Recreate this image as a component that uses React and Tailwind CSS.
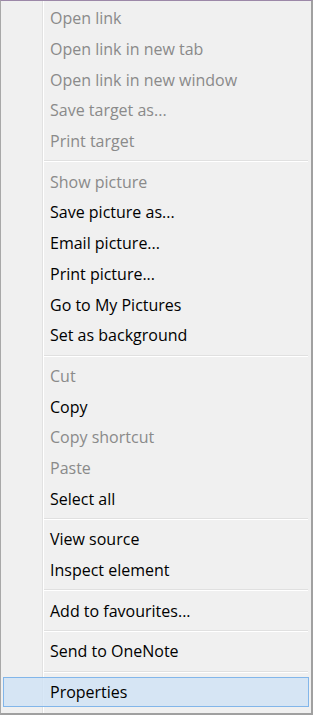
const GROUPS = [
  [
    { label: 'Open link', disabled: true },
    { label: 'Open link in new tab', disabled: true },
    { label: 'Open link in new window', disabled: true },
    { label: 'Save target as...', disabled: true },
    { label: 'Print target', disabled: true },
  ],
  [
    { label: 'Show picture', disabled: true },
    { label: 'Save picture as...' },
    { label: 'Email picture...' },
    { label: 'Print picture...' },
    { label: 'Go to My Pictures' },
    { label: 'Set as background' },
  ],
  [
    { label: 'Cut', disabled: true },
    { label: 'Copy' },
    { label: 'Copy shortcut', disabled: true },
    { label: 'Paste', disabled: true },
    { label: 'Select all' },
  ],
  [{ label: 'View source' }, { label: 'Inspect element' }],
  [{ label: 'Add to favourites...' }],
  [{ label: 'Send to OneNote' }],
  [{ label: 'Properties', active: true }],
]

function Item({ label, disabled, active }) {
  return (
    <div className="h-[30.7px] px-[2px]">
      <div
        className={
          'h-full flex items-center pl-[46px] border ' +
          (active ? 'bg-[#cfe2f5]/80 border-[#82b6ea]' : 'border-transparent')
        }
      >
        <span className={disabled ? 'text-[#8a8a8a]' : 'text-black'}>{label}</span>
      </div>
    </div>
  )
}

function Separator() {
  return (
    <div className="h-[10px] flex items-center pl-[43px] pr-[3px]">
      <div className="w-full border-t border-b border-t-[#e0e0e0] border-b-white" />
    </div>
  )
}

export default function App() {
  return (
    <div
      className="w-[313px] h-[715px] bg-[#f0f0f0] border-t border-t-[#9c88a8] border-l border-l-[#a8a8a8] border-r-2 border-r-[#a0a0a0] border-b-2 border-b-[#a0a0a0] text-[16px] leading-none overflow-hidden"
      style={{ fontFamily: '"Open Sans", "Noto Sans", sans-serif' }}
    >
      <div className="h-full pt-[2px] bg-[linear-gradient(to_right,transparent_41px,#e2e2e2_41px,#e2e2e2_42px,#ffffff_42px,#ffffff_43px,transparent_43px)]">
        {GROUPS.map((group, gi) => (
          <div key={gi}>
            {gi > 0 && <Separator />}
            {group.map((item) => (
              <Item key={item.label} {...item} />
            ))}
          </div>
        ))}
      </div>
    </div>
  )
}
